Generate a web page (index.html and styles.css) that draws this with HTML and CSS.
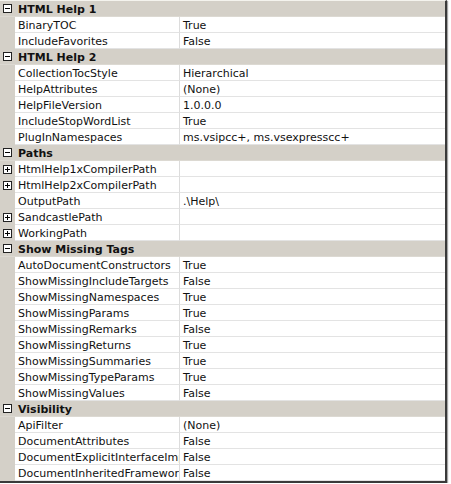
FILE: index.html
```html
<!DOCTYPE html>
<html>
<head>
<meta charset="utf-8">
<link rel="stylesheet" href="styles.css">
</head>
<body>
<div class="grid">
  <div class="cat"><span class="gut"><span class="box minus"></span></span><span class="cat-label">HTML Help 1</span></div>
  <div class="row"><span class="gut"></span><span class="name">BinaryTOC</span><span class="val">True</span></div>
  <div class="row"><span class="gut"></span><span class="name">IncludeFavorites</span><span class="val">False</span></div>

  <div class="cat"><span class="gut"><span class="box minus"></span></span><span class="cat-label">HTML Help 2</span></div>
  <div class="row"><span class="gut"></span><span class="name">CollectionTocStyle</span><span class="val">Hierarchical</span></div>
  <div class="row"><span class="gut"></span><span class="name">HelpAttributes</span><span class="val">(None)</span></div>
  <div class="row"><span class="gut"></span><span class="name">HelpFileVersion</span><span class="val">1.0.0.0</span></div>
  <div class="row"><span class="gut"></span><span class="name">IncludeStopWordList</span><span class="val">True</span></div>
  <div class="row"><span class="gut"></span><span class="name">PlugInNamespaces</span><span class="val">ms.vsipcc+, ms.vsexpresscc+</span></div>

  <div class="cat"><span class="gut"><span class="box minus"></span></span><span class="cat-label">Paths</span></div>
  <div class="row"><span class="gut"><span class="box plus"></span></span><span class="name">HtmlHelp1xCompilerPath</span><span class="val"></span></div>
  <div class="row"><span class="gut"><span class="box plus"></span></span><span class="name">HtmlHelp2xCompilerPath</span><span class="val"></span></div>
  <div class="row"><span class="gut"></span><span class="name">OutputPath</span><span class="val">.\Help\</span></div>
  <div class="row"><span class="gut"><span class="box plus"></span></span><span class="name">SandcastlePath</span><span class="val"></span></div>
  <div class="row"><span class="gut"><span class="box plus"></span></span><span class="name">WorkingPath</span><span class="val"></span></div>

  <div class="cat"><span class="gut"><span class="box minus"></span></span><span class="cat-label">Show Missing Tags</span></div>
  <div class="row"><span class="gut"></span><span class="name">AutoDocumentConstructors</span><span class="val">True</span></div>
  <div class="row"><span class="gut"></span><span class="name">ShowMissingIncludeTargets</span><span class="val">False</span></div>
  <div class="row"><span class="gut"></span><span class="name">ShowMissingNamespaces</span><span class="val">True</span></div>
  <div class="row"><span class="gut"></span><span class="name">ShowMissingParams</span><span class="val">True</span></div>
  <div class="row"><span class="gut"></span><span class="name">ShowMissingRemarks</span><span class="val">False</span></div>
  <div class="row"><span class="gut"></span><span class="name">ShowMissingReturns</span><span class="val">True</span></div>
  <div class="row"><span class="gut"></span><span class="name">ShowMissingSummaries</span><span class="val">True</span></div>
  <div class="row"><span class="gut"></span><span class="name">ShowMissingTypeParams</span><span class="val">True</span></div>
  <div class="row"><span class="gut"></span><span class="name">ShowMissingValues</span><span class="val">False</span></div>

  <div class="cat"><span class="gut"><span class="box minus"></span></span><span class="cat-label">Visibility</span></div>
  <div class="row"><span class="gut"></span><span class="name">ApiFilter</span><span class="val">(None)</span></div>
  <div class="row"><span class="gut"></span><span class="name">DocumentAttributes</span><span class="val">False</span></div>
  <div class="row"><span class="gut"></span><span class="name">DocumentExplicitInterfaceImplementations</span><span class="val">False</span></div>
  <div class="row"><span class="gut"></span><span class="name">DocumentInheritedFrameworkMembers</span><span class="val">False</span></div>
</div>
</body>
</html>
```

FILE: styles.css
```css
html, body {
  margin: 0;
  padding: 0;
  background: #ffffff;
}

.grid {
  width: 445px;
  border-top: 1px solid #f4f3ee;
  border-right: 2px solid #3a3a3a;
  border-bottom: 2px solid #3a3a3a;
  background: #ffffff;
  font-family: "DejaVu Sans", Verdana, sans-serif;
  font-size: 11px;
  color: #111;
  box-shadow: 1px 1px 1px rgba(0,0,0,0.35);
}

.row, .cat {
  display: grid;
  grid-template-columns: 15px 165px 1fr;
  height: 16px;
}

.cat {
  grid-template-columns: 15px 1fr;
  background: #d4d0c8;
  border-bottom: 1px solid #dcd9d2;
  box-sizing: border-box;
}

.gut {
  background: #d4d0c8;
  display: flex;
  align-items: center;
  justify-content: center;
  height: 16px;
}

.cat .gut {
  height: 15px;
}

.box {
  width: 7px;
  height: 7px;
  border: 1px solid #222;
  background: #fff;
  position: relative;
}

.box::before {
  content: "";
  position: absolute;
  left: 1px;
  top: 3px;
  width: 5px;
  height: 1px;
  background: #000;
}

.plus::after {
  content: "";
  position: absolute;
  left: 3px;
  top: 1px;
  width: 1px;
  height: 5px;
  background: #000;
}

.cat-label {
  font-weight: bold;
  line-height: 15px;
  height: 14px;
  padding-top: 1px;
  padding-left: 3px;
  white-space: nowrap;
  overflow: hidden;
}

.name, .val {
  line-height: 15px;
  height: 14px;
  padding-top: 1px;
  border-bottom: 1px solid #e3e3e3;
  white-space: nowrap;
  overflow: hidden;
}

.name {
  padding-left: 3px;
  border-right: 1px solid #dcdcdc;
}

.val {
  padding-left: 3px;
}
```
